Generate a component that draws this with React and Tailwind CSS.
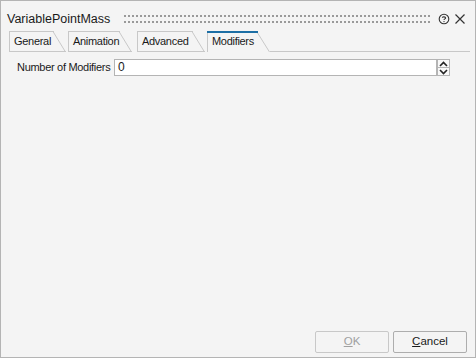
import React from 'react';

const Dots = () => (
    <svg className="flex-1 h-[8px] ml-[14px] mr-[6px]" height="8">
        <defs>
            <pattern id="grip" width="4" height="8" patternUnits="userSpaceOnUse">
                <rect x="0" y="0" width="2" height="2" fill="#9a9a9a" />
                <rect x="0" y="6" width="2" height="2" fill="#9a9a9a" />
            </pattern>
        </defs>
        <rect x="0" y="0" width="100%" height="8" fill="url(#grip)" />
    </svg>
);

const Tab = ({ label, active, width, gap }) => (
    <div className="flex h-[21px] items-stretch shrink-0" style={{ marginRight: gap }}>
        <div
            className={
                active
                    ? 'relative border-l border-[#c8c8c8] bg-[#f4f4f4] pl-[4px] pt-[4px]'
                    : 'relative border-l border-t border-b border-[#c8c8c8] bg-[#f4f4f4] pl-[4px] pt-[3px]'
            }
            style={{ width }}
        >
            {active && <div className="absolute -left-px right-0 top-0 h-[2px] bg-[#1d6fa5]" />}
            <div className="text-[11px] leading-[13px] tracking-[-0.3px] whitespace-nowrap text-[#1a1a1a]">{label}</div>
        </div>
        <svg width="13" height="21" viewBox="0 0 13 21" className="block">
            {!active && <line x1="0" y1="20.5" x2="13" y2="20.5" stroke="#c8c8c8" />}
            <line x1="0" y1={active ? 1 : 0.5} x2="12.5" y2="21" stroke="#c8c8c8" />
            {active ? (
                <line x1="0" y1="1" x2="1" y2="1" stroke="#1d6fa5" strokeWidth="2" />
            ) : (
                <line x1="0" y1="0.5" x2="1" y2="0.5" stroke="#c8c8c8" />
            )}
        </svg>
    </div>
);

const Button = ({ first, rest, disabled }) => (
    <button
        className={
            'w-[74px] h-[22px] border rounded-[2px] bg-[#f4f4f4] text-[11.5px] ' +
            (disabled ? 'border-[#c8c8c8] text-[#a0a0a0]' : 'border-[#adadad] text-[#1a1a1a]')
        }
    >
        <span className="underline">{first}</span>
        {rest}
    </button>
);

const App = () => {
    return (
        <div className="w-[476px] h-[358px] bg-[#f4f4f4] border border-[#b4b4b4] flex flex-col font-['Liberation_Sans',Arial,sans-serif] text-[#1a1a1a]">
            <div className="flex items-center h-[29px] pl-[6px] pr-[9px] pt-[7px]">
                <span className="text-[12.5px]">VariablePointMass</span>
                <Dots />
                <svg width="12" height="12" viewBox="0 0 12 12" className="mr-[4px]">
                    <circle cx="6" cy="6" r="4.8" fill="none" stroke="#333" strokeWidth="1.1" />
                    <path d="M4.4 4.7 C4.4 3.6 7.6 3.5 7.6 4.9 C7.6 5.9 6 5.9 6 7" fill="none" stroke="#333" strokeWidth="1.1" />
                    <circle cx="6" cy="8.6" r="0.7" fill="#333" />
                </svg>
                <svg width="12" height="12" viewBox="0 0 12 12">
                    <path d="M1.5 1.5 L10.5 10.5 M10.5 1.5 L1.5 10.5" stroke="#333" strokeWidth="1.2" />
                </svg>
            </div>

            <div className="flex items-end pl-[8px] pr-[5px] mt-[1px]">
                <Tab label="General" width={44} gap={2} />
                <Tab label="Animation" width={51} gap={5} />
                <Tab label="Advanced" width={55} gap={2} />
                <Tab label="Modifiers" active width={50} />
                <div className="flex-1 h-[1px] bg-[#c8c8c8]" />
            </div>

            <div className="flex items-center mt-[7px] pl-[16px]">
                <span className="text-[11px] tracking-[-0.3px] w-[97px] shrink-0 whitespace-nowrap">Number of Modifiers</span>
                <div className="w-[323px] h-[17px] shrink-0 bg-white border border-[#b4b4b4] text-[12px] leading-[15px] pl-[3px]">0</div>
                <div className="flex flex-col w-[13px] h-[17px] shrink-0">
                    <div className="flex-1 border border-[#b4b4b4] bg-[#f8f8f8] flex items-center justify-center">
                        <svg width="9" height="6" viewBox="0 0 9 6">
                            <path d="M1 5 L4.5 1.5 L8 5" fill="none" stroke="#222" strokeWidth="1.6" />
                        </svg>
                    </div>
                    <div className="flex-1 border border-t-0 border-[#b4b4b4] bg-[#f8f8f8] flex items-center justify-center">
                        <svg width="9" height="6" viewBox="0 0 9 6">
                            <path d="M1 1 L4.5 4.5 L8 1" fill="none" stroke="#222" strokeWidth="1.6" />
                        </svg>
                    </div>
                </div>
            </div>

            <div className="flex-1" />

            <div className="flex justify-end gap-[4px] pr-[8px] pb-[4px]">
                <Button first="O" rest="K" disabled />
                <Button first="C" rest="ancel" />
            </div>
        </div>
    );
};

export default App;
